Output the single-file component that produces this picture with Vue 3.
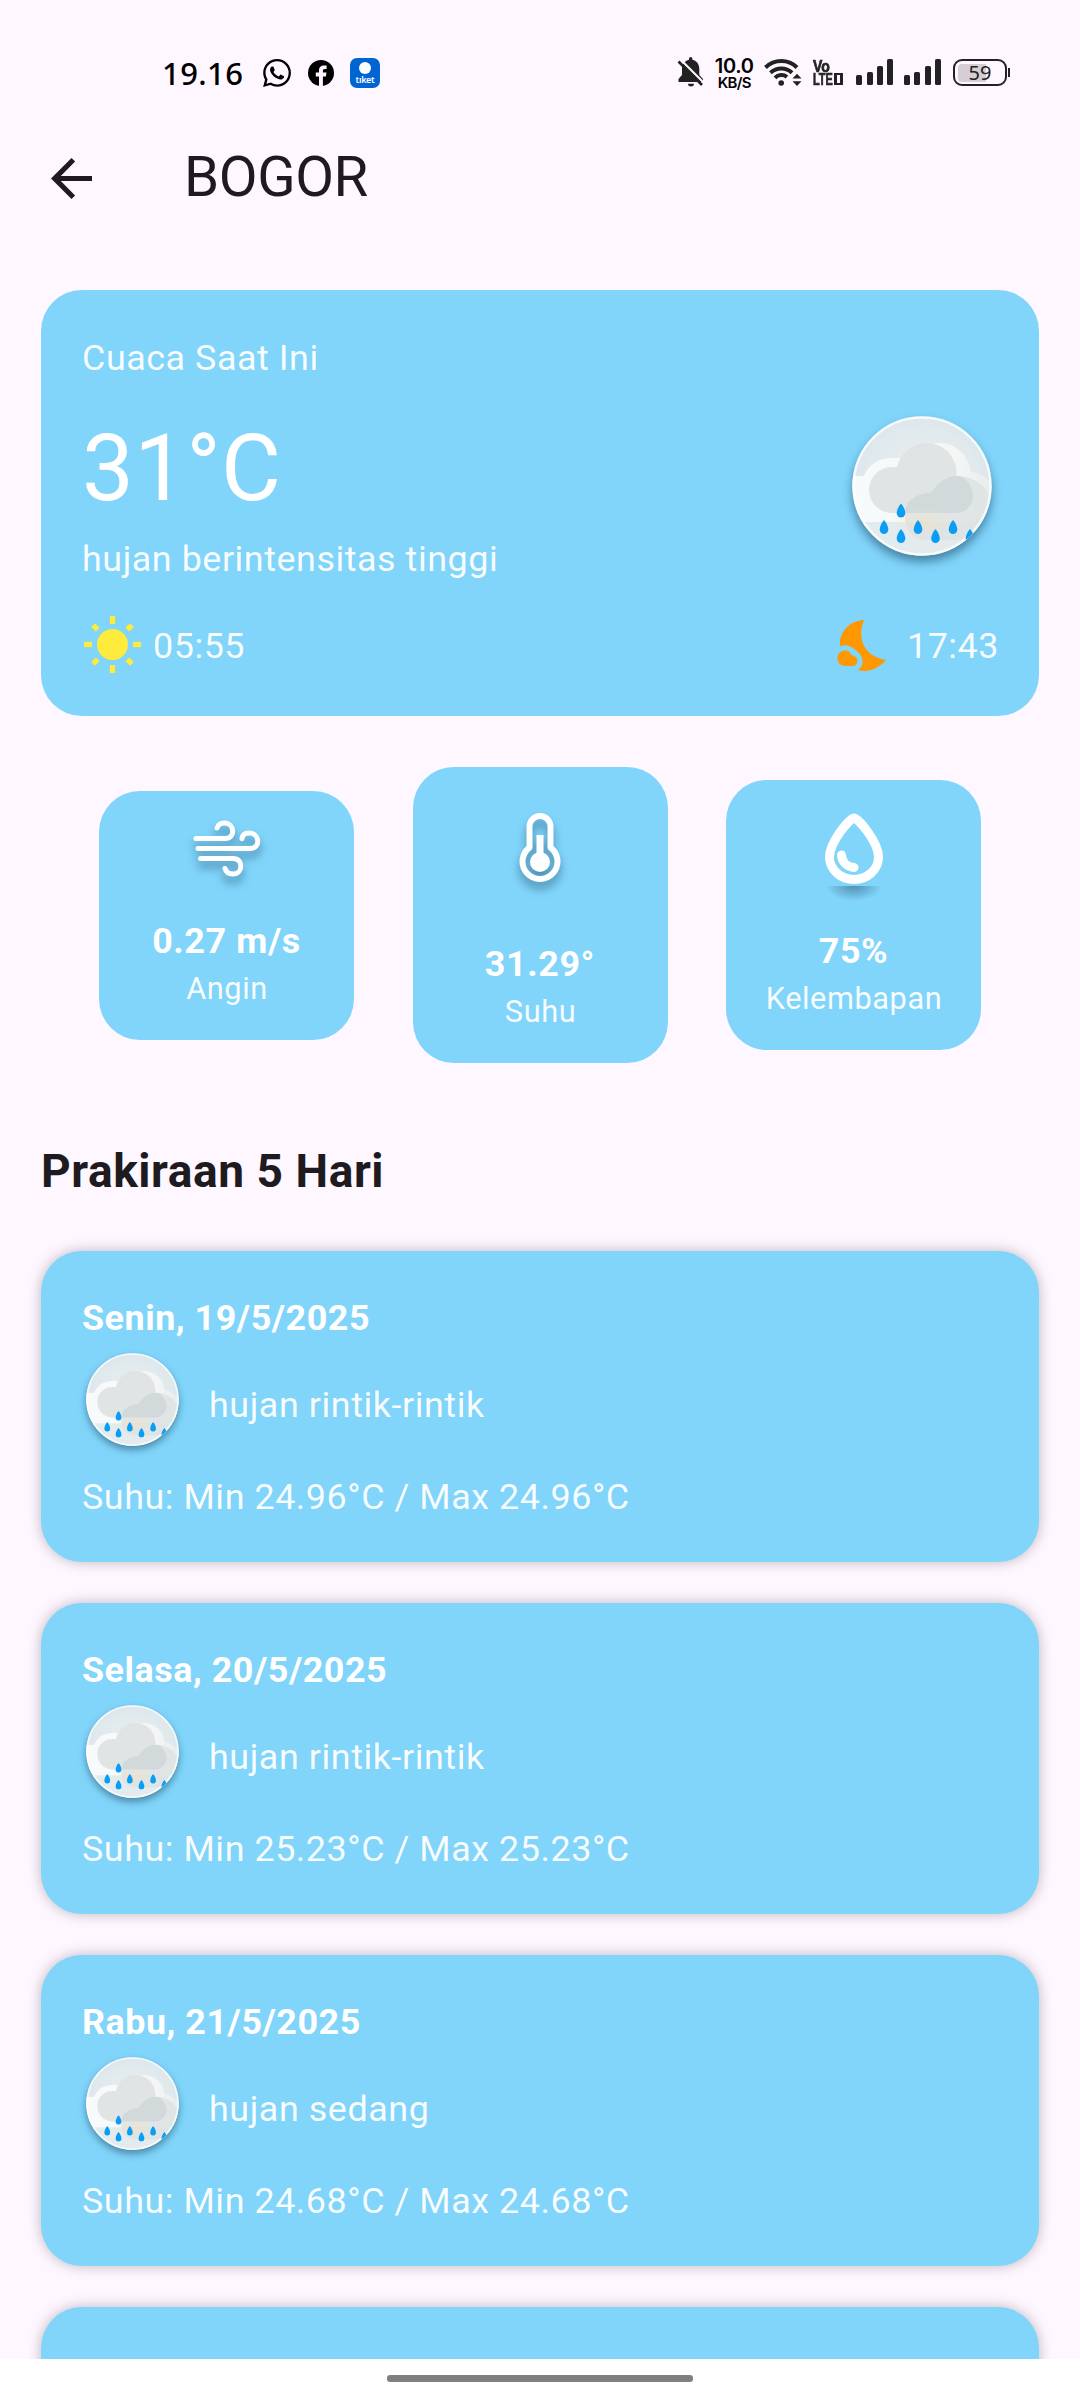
<script setup>
const stats = [
  { key: 'wind', value: '0.27 m/s', label: 'Angin' },
  { key: 'temp', value: '31.29°', label: 'Suhu' },
  { key: 'drop', value: '75%', label: 'Kelembapan' },
]
const days = [
  { date: 'Senin, 19/5/2025', desc: 'hujan rintik-rintik', temp: 'Suhu: Min 24.96°C / Max 24.96°C' },
  { date: 'Selasa, 20/5/2025', desc: 'hujan rintik-rintik', temp: 'Suhu: Min 25.23°C / Max 25.23°C' },
  { date: 'Rabu, 21/5/2025', desc: 'hujan sedang', temp: 'Suhu: Min 24.68°C / Max 24.68°C' },
  { date: '', desc: '', temp: '' },
]
const sunRays = [0, 45, 90, 135, 180, 225, 270, 315]
const drops = [[49, 97.500], [32, 114], [49, 123], [66, 114], [83.5, 123], [101, 114], [118, 123]]
</script>

<template>
  <svg width="0" height="0" class="defs">
    <defs>
      <radialGradient id="sky" cx="0.5" cy="0.5" r="0.5">
        <stop offset="0" stop-color="#eef2f3" />
        <stop offset="1" stop-color="#dde7eb" />
      </radialGradient>
      <linearGradient id="haze" x1="0" y1="0" x2="1" y2="0">
        <stop offset="0" stop-color="#f8fbfc" />
        <stop offset="0.75" stop-color="#f4f6f6" />
        <stop offset="1" stop-color="#e6ebec" />
      </linearGradient>
      <radialGradient id="glow" cx="0.5" cy="0.5" r="0.5">
        <stop offset="0" stop-color="#f0e0bd" stop-opacity="0.55" />
        <stop offset="1" stop-color="#f0e6d0" stop-opacity="0" />
      </radialGradient>
      <clipPath id="disc"><circle cx="70" cy="70" r="69.5" /></clipPath>
      <symbol id="rain" viewBox="0 0 140 140">
        <g clip-path="url(#disc)">
          <rect width="140" height="140" fill="url(#sky)" />
          <path d="M-2 60H12C17 48 27 42 40 42L60 42C68 31 78 27 88 27C104 27 117 40 119 56C130 57 137 63 142 72V110H-2Z" fill="url(#haze)" />
          <rect x="-2" y="106" width="70" height="36" fill="#e2ebee" />
          <rect x="60" y="106" width="80" height="36" fill="#e4ebed" />
          <path d="M75 124C60 124 53 113 53 101C53 86 64 77 79 77C86 66 95 60 106 60C121 60 136 70 139 84V124Z" fill="#dce1e2" fill-opacity=".8" />
          <path d="M40 97A23 23 0 0 1 40 51C42 51 43 51 45 51A30 30 0 0 1 104 63C115 65 121 73 121 80C121 90 113 97 104 97Z" fill="#e0e4e4" />
          <path d="M53 97C54 84 65 77 79 77C86 66 95 60 106 60C115 61 121 71 121 80C121 90 113 97 104 97Z" fill="#d2d9da" />
          <ellipse cx="72" cy="107" rx="34" ry="15" fill="url(#glow)" />
        </g>
        <circle cx="70" cy="70" r="68.5" fill="none" stroke="#fff" stroke-opacity=".75" stroke-width="2.5" />
        <g clip-path="url(#disc)">
          <path v-for="(d, i) in drops" :key="i" :transform="`translate(${d[0]} ${d[1]})`" d="M0 -10C2.500 -7.500 4.300 -3 4.300 -0.500A4.300 4.500 0 0 1 -4.300 -0.500C-4.300 -3 -2.500 -7.500 0 -10Z" fill="#0a9df5" />
        </g>
      </symbol>
    </defs>
  </svg>

  <div class="screen">
    <header class="status">
      <div class="left">
        <span class="clock">19.16</span>
        <svg class="wa" viewBox="0 0 24 24"><path d="M17.472 14.382c-.297-.149-1.758-.867-2.03-.967-.273-.099-.471-.148-.67.15-.197.297-.767.966-.94 1.164-.173.199-.347.223-.644.075-.297-.15-1.255-.463-2.39-1.475-.883-.788-1.480-1.761-1.653-2.059-.173-.297-.018-.458.130-.606.134-.133.298-.347.446-.520.149-.174.198-.298.298-.497.099-.198.050-.371-.025-.520-.075-.149-.669-1.612-.916-2.207-.242-.579-.487-.500-.669-.510-.173-.008-.371-.010-.570-.010-.198 0-.520.074-.792.372-.272.297-1.040 1.016-1.040 2.479 0 1.462 1.065 2.875 1.213 3.074.149.198 2.096 3.200 5.077 4.487.709.306 1.262.489 1.694.625.712.227 1.360.195 1.871.118.571-.085 1.758-.719 2.006-1.413.248-.694.248-1.289.173-1.413-.074-.124-.272-.198-.570-.347m-5.421 7.403h-.004a9.870 9.870 0 0 1-5.031-1.378l-.361-.214-3.741.982.998-3.648-.235-.374a9.860 9.860 0 0 1-1.510-5.260c.001-5.450 4.436-9.884 9.888-9.884 2.640 0 5.122 1.030 6.988 2.898a9.825 9.825 0 0 1 2.893 6.994c-.003 5.450-4.437 9.884-9.885 9.884m8.413-18.297A11.815 11.815 0 0 0 12.050 0C5.495 0 .160 5.335.157 11.892c0 2.096.547 4.142 1.588 5.945L.057 24l6.305-1.654a11.882 11.882 0 0 0 5.683 1.448h.005c6.554 0 11.890-5.335 11.893-11.893a11.821 11.821 0 0 0-3.480-8.413Z" /></svg>
        <svg class="fb" viewBox="0 0 26 26"><circle cx="13" cy="13" r="13" /><path d="M11 26V16.500H7.800V12.600H11V10.500C11 7 13 5.400 16 5.400L18.600 5.600V9H16.800C15.300 9 14.900 9.700 14.900 10.900V12.600H18.500L17.900 16.500H14.900V26Z" fill="#fef7ff" /></svg>
        <div class="tiket"><i></i><span>tıket</span></div>
      </div>
      <div class="right">
        <svg class="bell" viewBox="0 0 28 30"><path d="M5 9C7 5.500 9 3.500 12 2.800V1.800A1.700 1.700 0 0 1 15.400 1.800V2.800C20 4 22.300 7.500 22.300 12V18L26 22V25H1.500V22L5 18Z" /><path d="M11 26.800H17A3 2.600 0 0 1 11 26.800Z" /><path d="M3.500 2.500L27 26" stroke="#fef7ff" stroke-width="2.200" /><path d="M1.500 4.500L25 28" stroke="#222" stroke-width="2.600" /></svg>
        <div class="speed"><b>10.0</b><span>KB/S</span></div>
        <svg class="wifi" viewBox="0 0 38 30" fill="none" stroke="#222"><path d="M1.500 10.500A22.500 22.500 0 0 1 33 10.500M6.500 15.800A15.500 15.500 0 0 1 28 15.800M11 20.800A9 9 0 0 1 23 20" stroke-width="4" /><circle cx="17.200" cy="26" r="2.800" fill="#222" stroke="none" /><path d="M28.500 21.500L33 16.800L37.500 21.500ZM28.500 24.200L33 29L37.500 24.200Z" fill="#222" stroke="none" /></svg>
        <div class="volte"><b>Vo</b><div><b class="lte">LTE</b><i></i></div></div>
        <div class="bars"><i></i><i></i><i></i><i></i></div>
        <div class="bars"><i></i><i></i><i></i><i></i></div>
        <div class="battery"><div class="fill"></div><span>59</span></div>
        <div class="nub"></div>
      </div>
    </header>

    <nav class="appbar">
      <svg viewBox="0 0 16 16"><path d="M16 7H3.830L9.420 1.410L8 0L0 8L8 16L9.410 14.590L3.830 9H16Z" fill="#1d1b20" /></svg>
      <h1>BOGOR</h1>
    </nav>

    <section class="hero">
      <div class="t">Cuaca Saat Ini</div>
      <div class="mid">
        <div>
          <div class="big">31°C</div>
          <div class="t">hujan berintensitas tinggi</div>
        </div>
        <svg class="cond"><use href="#rain" /></svg>
      </div>
      <div class="times">
        <div class="time">
          <svg class="sun" viewBox="-28 -28 56 56" fill="#ffeb3b"><circle r="15.200" /><rect v-for="r in sunRays" :key="r" x="-2.600" y="-28" width="5.200" :height="r % 90 ? 6.5 : 7.800" :transform="r % 90 ? `rotate(${r}) translate(0 1)` : `rotate(${r})`" /></svg>
          <span class="t">05:55</span>
        </div>
        <div class="time">
          <svg class="moon" viewBox="0 0 49 52" fill="#ff9800"><path d="M27 0C21 14 23 35 49 40C41 49 31 53 21 50C27 46 27 38 22 33C19 30 17 28 14 27C11 25 7 25 3 26C2 12 12 1 27 0Z" /><path d="M8 46A7.700 7.700 0 0 1 8 30.600C11 30.600 13.500 32.500 14.800 35.500C18 35.500 20.500 38 20.500 40.800C20.500 44 18 46 15.500 46Z" /></svg>
          <span class="t">17:43</span>
        </div>
      </div>
    </section>

    <section class="stats">
      <div v-for="s in stats" :key="s.key" class="stat" :class="s.key">
        <svg v-if="s.key === 'wind'" class="ic" viewBox="0 0 66 56" fill="none" stroke="#fff" stroke-width="5" stroke-linecap="round"><path d="M3 18.500H32C43 18.500 42 3 31 3C27 3 25 5 24 8M5 28.500H57C68 28.500 67 13 56 13C51 13 50 15 49 18.500M7.500 38.500H40C51 38.500 50 54 40 54C35 54 33 52 32 48.500" /></svg>
        <svg v-else-if="s.key === 'temp'" class="ic" viewBox="0 0 50 70" fill="none" stroke="#fff"><path d="M14.500 14.500A10.500 10.500 0 0 1 35.500 14.500V35.500A17.500 17.500 0 1 1 14.500 35.500Z" stroke-width="6" stroke-linejoin="round" /><path d="M25 23V50" stroke-width="7" /><circle cx="25" cy="50" r="10" fill="#fff" stroke="none" /></svg>
        <svg v-else class="ic" viewBox="0 0 60 90" fill="none"><defs><radialGradient id="shade" cx=".5" cy="0" r="1" gradientTransform="translate(.5 0) scale(.5 1) translate(-.5 0)"><stop offset="0" stop-color="#3d7492" stop-opacity=".7" /><stop offset="1" stop-color="#3d7492" stop-opacity="0" /></radialGradient></defs><rect x="2" y="73" width="56" height="15" fill="url(#shade)" /><path d="M30 5C26 5 5.500 29 5.500 44A24.500 22.500 0 0 0 54.500 44C54.500 29 34 5 30 5Z" stroke="#fff" stroke-width="9" stroke-linejoin="round" /><path d="M17.500 42C18 49 23 54 30 54.500" stroke="#fff" stroke-width="9" stroke-linecap="round" /></svg>
        <div class="val">{{ s.value }}</div>
        <div class="lab">{{ s.label }}</div>
      </div>
    </section>

    <h2>Prakiraan 5 Hari</h2>
    <section class="days">
      <article v-for="(d, i) in days" :key="i" class="day">
        <template v-if="d.date">
          <div class="date">{{ d.date }}</div>
          <div class="row"><svg><use href="#rain" /></svg><span class="t">{{ d.desc }}</span></div>
          <div class="t temp-range">{{ d.temp }}</div>
        </template>
      </article>
    </section>
    <footer><i></i></footer>
  </div>
</template>

<style>
html, body { margin: 0; background: #fef7ff; }
</style>

<style scoped>
* { box-sizing: border-box; }
svg { display: block; flex: none; }
.defs { position: absolute; }
.screen { width: 1080px; height: 2400px; overflow: hidden; display: flex; flex-direction: column; background: #fef7ff; color: #1d1b20; font-family: Roboto, sans-serif; }
.status { height: 113px; flex: none; display: flex; justify-content: space-between; padding: 57px 70px 0 162px; }
.left, .right { display: flex; align-items: flex-start; height: 32px; }
.clock { font: 500 31px/32px "Noto Sans", sans-serif; color: #000; width: 101px; letter-spacing: .4px; }
.wa { width: 28px; height: 28px; margin-top: 2px; fill: #000; }
.fb { width: 26px; height: 26px; margin: 3px 0 0 17px; fill: #000; }
.tiket { width: 30px; height: 30px; margin: 1px 0 0 16px; border-radius: 7px; background: #0064d2; display: flex; flex-direction: column; align-items: center; }
.tiket i { width: 12px; height: 12px; border-radius: 50%; background: #fff; margin-top: 4px; }
.tiket span { color: #fff; font: 600 9px/9px "Noto Sans", sans-serif; margin-top: 1px; letter-spacing: -.3px; }
.bell { width: 28px; height: 30px; fill: #222; }
.speed { width: 42px; margin-left: 8px; display: flex; flex-direction: column; align-items: center; color: #000; white-space: nowrap; }
.speed b { font: 600 20px/18px Inter, sans-serif; letter-spacing: -.3px; }
.speed span { font: 600 15px/14px Inter, sans-serif; margin-top: 1px; letter-spacing: -.7px; }
.wifi { width: 38px; height: 30px; margin-left: 9px; }
.volte { width: 32px; margin-left: 11px; padding-top: 3px; color: #222; }
.volte b { display: block; width: 21px; font: 700 16.500px/13px "Liberation Sans", sans-serif; -webkit-text-stroke: .7px #222; transform: scaleX(.85); transform-origin: left; }
.volte div { display: flex; }
.volte .lte { width: 21px; transform: scaleX(.66); }
.volte i { width: 9px; height: 12px; flex: none; border: solid #222; border-width: 2px 3px; }
.bars { display: flex; align-items: flex-end; gap: 4.300px; height: 28px; margin-left: 11px; }
.bars i { width: 6px; background: #222; border-radius: 1.500px; height: 10.500px; }
.bars i:nth-child(2) { height: 13px; }
.bars i:nth-child(3) { height: 19px; }
.bars i:nth-child(4) { height: 26px; }
.battery { width: 54px; height: 27px; margin: 2px 0 0 12px; border: 2px solid #222; border-radius: 9px; display: grid; padding: 2.500px 3px; }
.battery .fill { grid-area: 1/1; width: 28px; height: 18px; border-radius: 4px 0 0 4px; background: #d5ced6; }
.battery span { grid-area: 1/1; text-align: center; font: 400 20px/18px "Noto Sans", sans-serif; color: #222; }
.nub { width: 2px; height: 9px; background: #222; margin: 11px 0 0 1px; }

.appbar { height: 177px; flex: none; display: flex; padding: 0 0 0 51px; }
.appbar svg { width: 41px; height: 41px; margin-top: 45px; }
h1 { font: 400 56.400px/66px Roboto, sans-serif; letter-spacing: -.4px; margin: 31px 0 0 92px; }

.hero { margin: 0 41px; height: 426px; flex: none; border-radius: 41px; background: #81d4fa; padding: 41px; color: #fff; }
.t { font-size: 35.900px; line-height: 51px; letter-spacing: .54px; color: #fffffff0; }
.hero > .t { height: 51px; padding-top: 2px; }
.mid { display: flex; justify-content: space-between; height: 205px; }
.big { font-size: 92.250px; line-height: 110px; margin: 32px 0 10px; letter-spacing: .3px; color: #fff; }
.cond { width: 140px; height: 140px; margin: 34px 6px 0 0; overflow: visible; filter: drop-shadow(0 6px 5px rgba(30, 80, 110, .6)); }
.times { display: flex; justify-content: space-between; margin-top: 24px; }
.time { display: flex; align-items: flex-start; }
.time .t { margin-top: 10px; }
.sun { width: 57px; height: 57px; margin: 5px 12px 0 2px; }
.moon { width: 49px; height: 52px; margin: 9px 21px 0 0; }
.moon + .t { margin-right: -1px; }

.stats { height: 296px; flex: none; margin: 51px 99px 0; display: flex; justify-content: space-between; align-items: center; }
.stat { width: 255px; border-radius: 41px; background: #81d4fa; color: #fff; display: flex; flex-direction: column; align-items: center; justify-content: flex-end; padding-bottom: 31px; }
.stat.wind { height: 249px; }
.stat.temp { height: 296px; }
.stat.drop { height: 270px; }
.ic { overflow: visible; margin-bottom: auto; }
.wind .ic { width: 66px; height: 56px; margin: 29px 2px auto 0; filter: drop-shadow(0 7px 4px rgba(30, 80, 110, .55)); }
.temp .ic { width: 50px; height: 70px; margin-top: 45px; filter: drop-shadow(0 7px 4px rgba(30, 80, 110, .55)); }
.drop .ic { width: 60px; height: 90px; margin-top: 33px; }
.val { font-size: 35.900px; font-weight: 700; line-height: 51px; letter-spacing: .6px; margin-bottom: 1px; }
.lab { font-size: 30.750px; line-height: 41px; letter-spacing: .56px; padding-left: 1px; color: #fffffff0; }

h2 { font: 700 46.100px/60px Roboto, sans-serif; letter-spacing: .55px; margin: 78px 0 0 41px; height: 110px; flex: none; }
.days { display: flex; flex-direction: column; gap: 41px; height: 1108px; flex: none; padding: 0 41px; }
.day { height: 311px; flex: none; border-radius: 41px; background: #81d4fa; padding: 42px 41px 41px; color: #fff; box-shadow: 0 0 14px rgba(0, 0, 0, .26); }
.date { font-size: 35.900px; font-weight: 700; line-height: 51px; letter-spacing: .52px; }
.row { display: flex; height: 102px; }
.row svg { width: 93px; height: 93px; margin: 9px 30px 0 4px; overflow: visible; filter: drop-shadow(0 4px 3.500px rgba(30, 80, 110, .55)); }
.row .t { margin-top: 36px; letter-spacing: .56px; }
.temp-range { margin-top: 26px; }
footer { height: 41px; flex: none; background: #fff; display: flex; justify-content: center; padding-top: 16px; position: relative; }
footer i { width: 306px; height: 7px; border-radius: 3px; background: #808080; }
</style>
